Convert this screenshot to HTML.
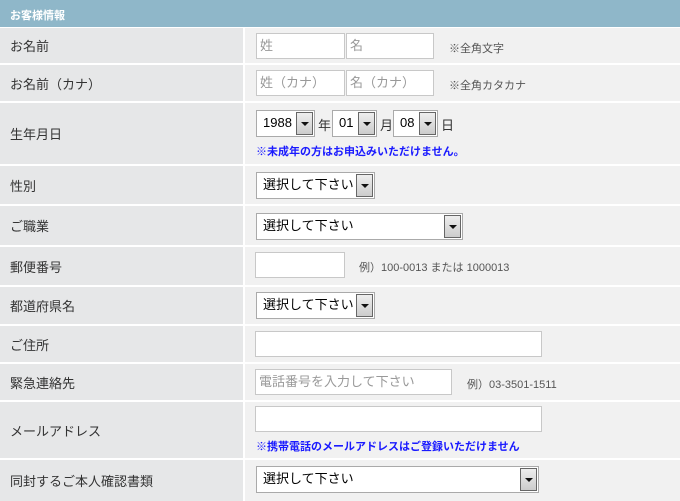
<!DOCTYPE html><html><head><meta charset="utf-8"><style>
*{margin:0;padding:0;box-sizing:border-box}
body{width:680px;height:501px;background:#fff;font-family:"Liberation Sans","Noto Sans CJK JP",sans-serif;position:relative;overflow:hidden;color:#333}
.a{position:absolute}
.hd{left:0;top:0;width:680px;height:27px;background:#8fb7c9;color:#fff;font-size:11px;font-weight:bold;padding:7px 0 0 10px}
.l{left:0;width:243px;background:#e6e7e8;font-size:13px;padding-left:10px;display:flex;align-items:center}
.v{left:245px;width:435px;background:#f1f1f1}
.in{background:#fff;border:1px solid #c8c8c8;height:26px;font-size:13px;color:#999;padding:0 0 0 3px;line-height:24px}
.sel{background:#fff;border:1px solid #aaa;height:27px;font-size:13px;color:#000;padding:0 0 0 6px;line-height:24px}
.sel b{position:absolute;right:1px;top:1px;width:17px;height:23px;border:1px solid #666;background:linear-gradient(#eee,#ccc)}
.sel b:after{content:"";position:absolute;left:4px;top:9px;border-left:4px solid transparent;border-right:4px solid transparent;border-top:4px solid #111}
.n{font-size:11px;color:#555}
.bl{font-size:11px;color:#1a1aff;font-weight:bold}
.t{font-size:13px;color:#333}
</style></head><body>
<div class="a hd">お客様情報</div>

<div class="a l" style="top:28px;height:35px">お名前</div><div class="a v" style="top:28px;height:35px"></div>
<div class="a in" style="left:256px;top:33px;width:89px">姓</div>
<div class="a in" style="left:346px;top:33px;width:88px">名</div>
<div class="a n" style="left:449px;top:40px">※全角文字</div>

<div class="a l" style="top:65px;height:36px">お名前（カナ）</div><div class="a v" style="top:65px;height:36px"></div>
<div class="a in" style="left:256px;top:70px;width:89px">姓（カナ）</div>
<div class="a in" style="left:346px;top:70px;width:88px">名（カナ）</div>
<div class="a n" style="left:449px;top:77px">※全角カタカナ</div>

<div class="a l" style="top:103px;height:61px">生年月日</div><div class="a v" style="top:103px;height:61px"></div>
<div class="a sel" style="left:256px;top:110px;width:59px">1988<b></b></div>
<div class="a t" style="left:318px;top:115px">年</div>
<div class="a sel" style="left:332px;top:110px;width:45px">01<b></b></div>
<div class="a t" style="left:380px;top:115px">月</div>
<div class="a sel" style="left:393px;top:110px;width:45px">08<b></b></div>
<div class="a t" style="left:441px;top:115px">日</div>
<div class="a bl" style="left:256px;top:143px">※未成年の方はお申込みいただけません。</div>

<div class="a l" style="top:166px;height:38px">性別</div><div class="a v" style="top:166px;height:38px"></div>
<div class="a sel" style="left:256px;top:172px;width:119px">選択して下さい<b></b></div>

<div class="a l" style="top:206px;height:39px">ご職業</div><div class="a v" style="top:206px;height:39px"></div>
<div class="a sel" style="left:256px;top:213px;width:207px">選択して下さい<b></b></div>

<div class="a l" style="top:247px;height:38px">郵便番号</div><div class="a v" style="top:247px;height:38px"></div>
<div class="a in" style="left:255px;top:252px;width:90px"></div>
<div class="a n" style="left:359px;top:259px">例）100-0013 または 1000013</div>

<div class="a l" style="top:287px;height:37px">都道府県名</div><div class="a v" style="top:287px;height:37px"></div>
<div class="a sel" style="left:256px;top:292px;width:119px">選択して下さい<b></b></div>

<div class="a l" style="top:326px;height:36px">ご住所</div><div class="a v" style="top:326px;height:36px"></div>
<div class="a in" style="left:255px;top:331px;width:287px"></div>

<div class="a l" style="top:364px;height:36px">緊急連絡先</div><div class="a v" style="top:364px;height:36px"></div>
<div class="a in" style="left:255px;top:369px;width:197px">電話番号を入力して下さい</div>
<div class="a n" style="left:467px;top:376px">例）03-3501-1511</div>

<div class="a l" style="top:402px;height:56px">メールアドレス</div><div class="a v" style="top:402px;height:56px"></div>
<div class="a in" style="left:255px;top:406px;width:287px"></div>
<div class="a bl" style="left:256px;top:438px">※携帯電話のメールアドレスはご登録いただけません</div>

<div class="a l" style="top:460px;height:41px">同封するご本人確認書類</div><div class="a v" style="top:460px;height:41px"></div>
<div class="a sel" style="left:256px;top:466px;width:283px">選択して下さい<b></b></div>
</body></html>
